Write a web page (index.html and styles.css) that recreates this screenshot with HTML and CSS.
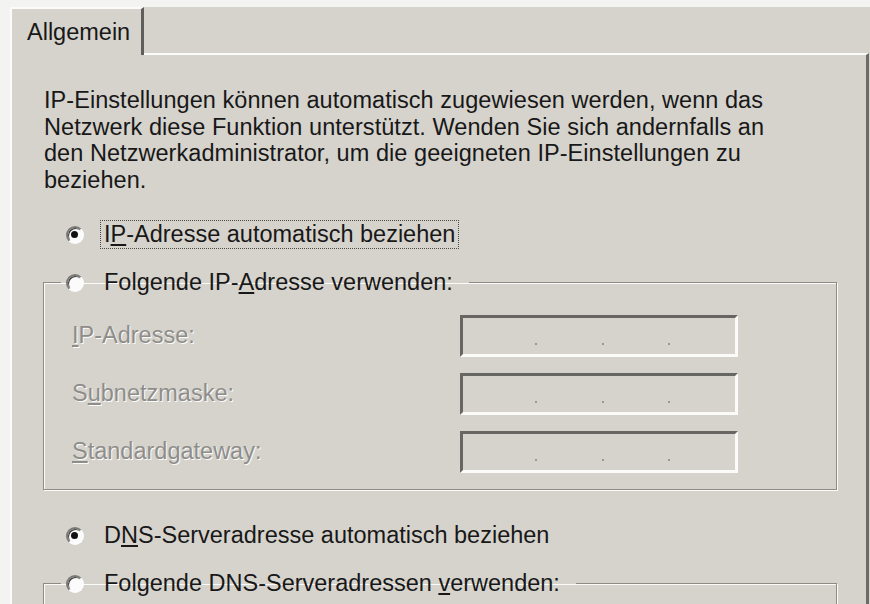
FILE: index.html
```html
<!DOCTYPE html>
<html lang="de">
<head>
    <meta charset="UTF-8">
    <title>Eigenschaften von Internetprotokoll (TCP/IP)</title>
    <link rel="stylesheet" href="styles.css">
</head>
<body>
    <div class="dialog">
        <div class="tabs">
            <div class="tab">Allgemein</div>
        </div>

        <div class="panel">
            <p class="intro">
                IP-Einstellungen können automatisch zugewiesen werden, wenn das<br>
                Netzwerk diese Funktion unterstützt. Wenden Sie sich andernfalls an<br>
                den Netzwerkadministrator, um die geeigneten IP-Einstellungen zu<br>
                beziehen.
            </p>

            <div class="option">
                <span class="radio checked"></span>
                <span class="caption focus">I<u>P</u>-Adresse automatisch beziehen</span>
            </div>

            <fieldset class="group">
                <legend class="option">
                    <span class="radio"></span>
                    <span class="caption">Folgende IP-<u>A</u>dresse verwenden:</span>
                </legend>
                <div class="fields">
                    <label class="disabled"><u>I</u>P-Adresse:</label>
                    <div class="ipbox"><i></i><i></i><i></i></div>
                    <label class="disabled">S<u>u</u>bnetzmaske:</label>
                    <div class="ipbox"><i></i><i></i><i></i></div>
                    <label class="disabled"><u>S</u>tandardgateway:</label>
                    <div class="ipbox"><i></i><i></i><i></i></div>
                </div>
            </fieldset>

            <div class="option dns">
                <span class="radio checked"></span>
                <span class="caption">D<u>N</u>S-Serveradresse automatisch beziehen</span>
            </div>

            <fieldset class="group open">
                <legend class="option">
                    <span class="radio"></span>
                    <span class="caption">Folgende DNS-Serveradressen <u>v</u>erwenden:</span>
                </legend>
            </fieldset>
        </div>
    </div>
</body>
</html>
```

FILE: styles.css
```css
body {
    margin: 0;
    height: 604px;
    overflow: hidden;
    background: #f3f3f1;
    font-family: "Liberation Sans", Arial, sans-serif;
    font-size: 23.5px;
    color: #181818;
}

.dialog {
    margin: 7px 0 0 10px;
    background: #d6d3cd;
    height: 597px;
}

/* Reiter */
.tabs {
    display: flex;
    height: 46px;
}
.tab {
    width: 114px;
    padding: 10px 0 0 15px;
    border-top: 2px solid #fbfbfa;
    border-left: 2px solid #fbfbfa;
    border-right: 3px solid #5f5e5b;
    margin-bottom: -2px;
    background: #d6d3cd;
    position: relative;
    z-index: 1;
    line-height: 26px;
}

.panel {
    border-top: 2px solid #fbfbfa;
    border-left: 2px solid #fbfbfa;
    border-right: 3px solid #6b6a67;
    margin-right: 1px;
    padding: 32px 29px 0 31px;
    height: 560px;
    box-sizing: border-box;
}

.intro {
    margin: 0 0 26px 1px;
    line-height: 26.7px;
    letter-spacing: 0.05px;
    white-space: nowrap;
}

/* Optionsfelder */
.option {
    display: flex;
    align-items: center;
    height: 30px;
    padding-left: 23px;
    white-space: nowrap;
}
.option.dns {
    margin-top: 31px;
}
.radio {
    width: 14px;
    height: 14px;
    flex: none;
    border-radius: 50%;
    border: 2px solid;
    border-color: #7a7976 #fdfdfd #fdfdfd #7a7976;
    background: #fbfbfb;
    box-shadow: inset 1px 1px 0 #3a3a3a;
    margin-right: 16px;
    position: relative;
}
.radio.checked::after {
    content: "";
    position: absolute;
    left: 3px;
    top: 3px;
    width: 7px;
    height: 7px;
    border-radius: 50%;
    background: #111;
}
.caption {
    padding: 0 3px;
    border: 1px dotted transparent;
    line-height: 27px;
}
.caption.focus {
    border-color: #4a4a4a;
}

/* Gruppenfelder */
.group {
    margin: 18px 0 0 0;
    padding: 17px 0 16px 0;
    border: 1px solid #8d8b87;
    box-shadow: inset 1px 1px 0 #fbfbfa, 1px 1px 0 #fbfbfa;
}
.group legend {
    margin-left: 17px;
    padding: 0 12px 0 5px;
}
.group.open {
    min-height: 60px;
}

.fields {
    display: grid;
    grid-template-columns: 388px 278px;
    row-gap: 16px;
    align-items: center;
    padding-left: 28px;
}
.disabled {
    color: #8e8d8a;
    text-shadow: 1px 1px 0 #fbfbfa;
    white-space: nowrap;
}

.ipbox {
    height: 42px;
    box-sizing: border-box;
    border-top: 3px solid #676663;
    border-left: 3px solid #676663;
    border-bottom: 3px solid #fbfbfa;
    border-right: 3px solid #fbfbfa;
    position: relative;
}
.ipbox i {
    position: absolute;
    top: 25px;
    width: 2px;
    height: 2px;
    background: #9a9996;
}
.ipbox i:nth-child(1) { left: 72px; }
.ipbox i:nth-child(2) { left: 139px; }
.ipbox i:nth-child(3) { left: 205px; }
```
